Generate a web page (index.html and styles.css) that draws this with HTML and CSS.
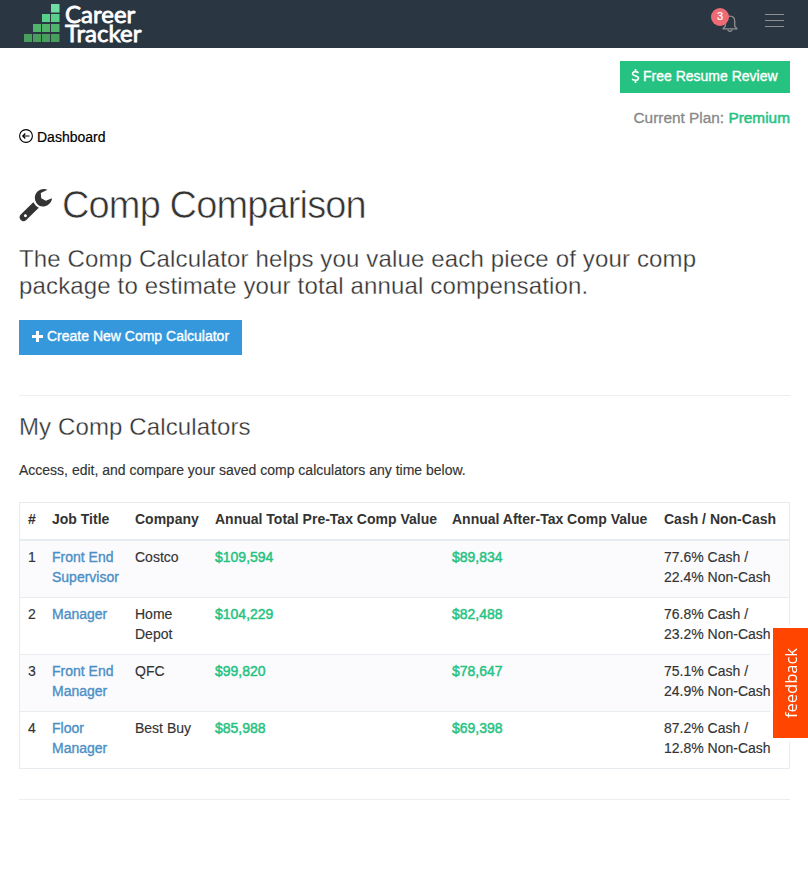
FILE: index.html
```html
<!DOCTYPE html>
<html lang="en">

<head>
    <meta charset="UTF-8">
    <meta name="viewport" content="width=device-width, initial-scale=1.0">
    <title>Comp Comparison | Career Tracker</title>
    <link rel="stylesheet" href="styles.css">
</head>

<body>
    <header class="navbar">
        <a class="brand" href="#">
            <svg class="brand-logo" width="38" height="40" viewBox="0 0 38 40">
                <g fill="#71dca4">
                    <rect x="28" y="1" width="8.500" height="8.500" />
                </g>
                <g fill="#58cf8b">
                    <rect x="19" y="11" width="8" height="8" />
                    <rect x="28" y="11" width="8.500" height="8" />
                </g>
                <g fill="#50b46c">
                    <rect x="10" y="21" width="8" height="8" />
                    <rect x="19" y="21" width="8" height="8" />
                    <rect x="28" y="21" width="8.500" height="8" />
                </g>
                <g fill="#479f5b">
                    <rect x="1" y="31" width="8" height="8" />
                    <rect x="10" y="31" width="8" height="8" />
                    <rect x="19" y="31" width="8" height="8" />
                    <rect x="28" y="31" width="8.500" height="8" />
                </g>
            </svg>
            <span class="brand-name">Career<br>Tracker</span>
        </a>
        <div class="nav-right">
            <a class="bell" href="#">
                <svg width="16" height="18" viewBox="0 0 16 18" fill="none" stroke="#8d8f91" stroke-width="1.300">
                    <path d="M3.300 11V6.500Q3.300 1.200 8 1.200T12.700 6.500V11L15 13.900H1z" stroke-linejoin="round" />
                    <path d="M5.500 14.500q2.500 4 5 0" />
                </svg>
                <span class="bell-count">3</span>
            </a>
            <button class="menu-button" aria-label="Menu"><span></span><span></span><span></span></button>
        </div>
    </header>

    <main class="container">
        <div class="account">
            <a class="btn btn-green" href="#"><svg class="dollar" width="9" height="14" viewBox="0 0 9 14" fill="none" stroke="#fff" stroke-width="1.700"><path d="M7.600 3.700Q4.500 2 2.500 3.100Q.4 5 3 6.300L6 7.500Q8.600 9 6.700 10.700Q4.300 12 1 10.200M4.500 0v2.700M4.500 11.300V14" /></svg>Free Resume Review</a>
            <div class="plan">Current Plan: <span class="plan-name">Premium</span></div>
        </div>

        <a class="back" href="#">
            <svg width="14" height="14" viewBox="0 0 14 14" fill="none" stroke="#000">
                <circle cx="7" cy="7" r="6.400" stroke-width="1.100" />
                <path d="M10.500 7H4M6.300 4.500L3.800 7l2.500 2.500" stroke-width="1.200" />
            </svg>
            Dashboard
        </a>

        <h1 class="title">
            <svg width="34" height="34" viewBox="0 0 34 34">
                <path fill="#333" d="M28.500 1.800C23 -.5 17 3 16 8.300C15.600 10.500 16 12.500 17 14.200C18.600 17.600 22.500 19 26 18.200C29.800 17.300 32.700 14 33 10.200L26.900 12.700L22.200 10.300L21.800 5z" />
                <path fill="#333" fill-rule="evenodd" d="M14.300 14.300L1.500 26.700Q-.5 29.500 1.800 32Q4.500 34.300 7 32.200L19.800 19.700Q16.500 18.300 14.300 14.300zM6.500 26.300a1.500 1.500 0 1 1-.1 3a1.500 1.500 0 0 1 .1-3z" />
            </svg>
            <span class="title-text">Comp Comparison</span>
        </h1>
        <h3 class="intro">The Comp Calculator helps you value each piece of your comp<br>package to estimate your total annual compensation.</h3>
        <a class="btn btn-blue" href="#"><svg width="11" height="11" viewBox="0 0 11 11"><path d="M4 0h3v4h4v3H7v4H4V7H0V4h4z" fill="#fff" /></svg>Create New Comp Calculator</a>

        <hr>

        <h3 class="section-title">My Comp Calculators</h3>
        <p class="help">Access, edit, and compare your saved comp calculators any time below.</p>

        <table class="calculators">
            <colgroup>
                <col class="col-num">
                <col class="col-job">
                <col class="col-company">
                <col class="col-pretax">
                <col class="col-aftertax">
                <col class="col-cash">
            </colgroup>
            <thead>
                <tr>
                    <th>#</th>
                    <th>Job Title</th>
                    <th>Company</th>
                    <th>Annual Total Pre-Tax Comp Value</th>
                    <th>Annual After-Tax Comp Value</th>
                    <th>Cash / Non-Cash</th>
                </tr>
            </thead>
            <tbody>
                <tr>
                    <td>1</td>
                    <td><a href="#">Front End Supervisor</a></td>
                    <td>Costco</td>
                    <td class="money">$109,594</td>
                    <td class="money">$89,834</td>
                    <td>77.6% Cash /<br>22.4% Non-Cash</td>
                </tr>
                <tr>
                    <td>2</td>
                    <td><a href="#">Manager</a></td>
                    <td>Home<br>Depot</td>
                    <td class="money">$104,229</td>
                    <td class="money">$82,488</td>
                    <td>76.8% Cash /<br>23.2% Non-Cash</td>
                </tr>
                <tr>
                    <td>3</td>
                    <td><a href="#">Front End Manager</a></td>
                    <td>QFC</td>
                    <td class="money">$99,820</td>
                    <td class="money">$78,647</td>
                    <td>75.1% Cash /<br>24.9% Non-Cash</td>
                </tr>
                <tr>
                    <td>4</td>
                    <td><a href="#">Floor<br>Manager</a></td>
                    <td>Best Buy</td>
                    <td class="money">$85,988</td>
                    <td class="money">$69,398</td>
                    <td>87.2% Cash /<br>12.8% Non-Cash</td>
                </tr>
            </tbody>
        </table>

        <hr class="hr-bottom">
    </main>

    <a class="feedback" href="#">feedback</a>
</body>

</html>
```

FILE: styles.css
```css
* {
    box-sizing: border-box;
}

body {
    margin: 0;
    font-family: "Helvetica Neue", "Liberation Sans", Arial, sans-serif;
    font-size: 14px;
    line-height: 20px;
    color: #333;
    background-color: #fff;
}

a {
    text-decoration: none;
}

/* navbar */
.navbar {
    height: 48px;
    padding: 0 24px 0 23px;
    background-color: #2b3643;
    display: flex;
    justify-content: space-between;
}

.brand {
    display: flex;
    gap: 4px;
    padding-top: 3px;
    color: #fff;
}

.brand-name {
    font-family: Lato, sans-serif;
    font-size: 24px;
    font-weight: 400;
    line-height: 19px;
    padding-top: 1px;
    -webkit-text-stroke: 0.8px #fff;
}

.nav-right {
    display: flex;
    gap: 27px;
}

.bell {
    position: relative;
    padding-top: 15px;
}

.bell-count {
    position: absolute;
    top: 8px;
    left: -11px;
    width: 18px;
    height: 18px;
    border-radius: 50%;
    background-color: #ed6b75;
    color: #fff;
    font-size: 11px;
    line-height: 17px;
    text-align: center;
    -webkit-text-stroke: 0.2px;
}

.menu-button {
    width: 19px;
    padding: 14px 0 0;
    border: 0;
    background: none;
    display: flex;
    flex-direction: column;
    gap: 5px;
}

.menu-button span {
    width: 19px;
    height: 1px;
    background-color: #8d8f91;
}

/* page */
.container {
    padding: 13px 18px 0 19px;
}

.account {
    display: flex;
    flex-direction: column;
    align-items: flex-end;
}

.btn {
    display: inline-flex;
    align-items: center;
    color: #fff;
    -webkit-text-stroke: 0.35px #fff;
}

.btn-green {
    width: 170px;
    height: 32px;
    padding: 0 0 2px 11px;
    gap: 3px;
    background-color: #26c281;
}

.plan {
    margin-top: 15px;
    font-size: 15.4px;
    color: #888;
    -webkit-text-stroke: 0.3px;
}

.plan-name {
    color: #26c281;
    -webkit-text-stroke: 0.5px;
}

.back {
    display: flex;
    gap: 4px;
    width: 100px;
    margin-top: -1px;
    color: #000;
    -webkit-text-stroke: 0.2px;
}

.back svg {
    margin-top: 2px;
}

.title {
    display: flex;
    gap: 9px;
    margin: 37px 0 0;
    font-size: 38px;
    font-weight: 300;
    line-height: 40px;
}

.title svg {
    margin-top: 4px;
}

/* thin white edge brings the glyphs down to a light weight */
.title-text,
.intro,
.section-title {
    -webkit-text-stroke: 0.3px #fff;
}

.title-text {
    padding-top: 1px;
    letter-spacing: -0.86px;
    -webkit-text-stroke-width: 0.6px;
}

.intro {
    margin: 20px 0 21px;
    font-size: 24px;
    font-weight: 300;
    line-height: 27px;
    letter-spacing: 0.15px;
}

.btn-blue {
    width: 223px;
    height: 35px;
    padding: 0 0 3px 13px;
    gap: 4px;
    background-color: #3598dc;
}

hr {
    margin: 40px 0 0;
    border: 0;
    border-top: 1px solid #eee;
}

.section-title {
    margin: 17px 0 0;
    font-size: 24px;
    font-weight: 300;
    line-height: 27px;
    letter-spacing: 0.12px;
}

.help {
    margin: 20px 0 0;
    -webkit-text-stroke: 0.15px;
}

/* table */
.calculators {
    width: 771px;
    margin-top: 22px;
    table-layout: fixed;
    border: 1px solid #e7ecf1;
    border-spacing: 0;
    -webkit-text-stroke: 0.15px;
}

.col-num { width: 24px; }
.col-job { width: 83px; }
.col-company { width: 80px; }
.col-pretax { width: 237px; }
.col-aftertax { width: 212px; }
.col-cash { width: 133px; }

.calculators th,
.calculators td {
    padding: 6px 8px 10px;
    text-align: left;
    vertical-align: top;
}

.calculators th {
    white-space: nowrap;
    border-bottom: 2px solid #e7ecf1;
    -webkit-text-stroke: 0;
}

.calculators td {
    border-bottom: 1px solid #e7ecf1;
}

.calculators tr:last-child td {
    border-bottom: 0;
}

.calculators tbody tr:nth-child(odd) {
    background-color: #fbfbfe;
}

.calculators a {
    color: #4b8fc5;
    -webkit-text-stroke: 0.35px;
}

.calculators .money {
    color: #26c281;
    -webkit-text-stroke: 0.45px;
}

.hr-bottom {
    margin-top: 30px;
}

/* side tab, rotated so the label reads upwards */
.feedback {
    position: fixed;
    top: 625px;
    right: 0;
    width: 38px;
    height: 116px;
    border: solid #fff;
    border-width: 3px 3px 3px 0;
    background-color: #ff4500;
    color: #fff;
    font-family: "Open Sans", sans-serif;
    font-size: 16.5px;
    line-height: 35px;
    text-align: center;
    writing-mode: vertical-rl;
    transform: rotate(180deg);
}
```
